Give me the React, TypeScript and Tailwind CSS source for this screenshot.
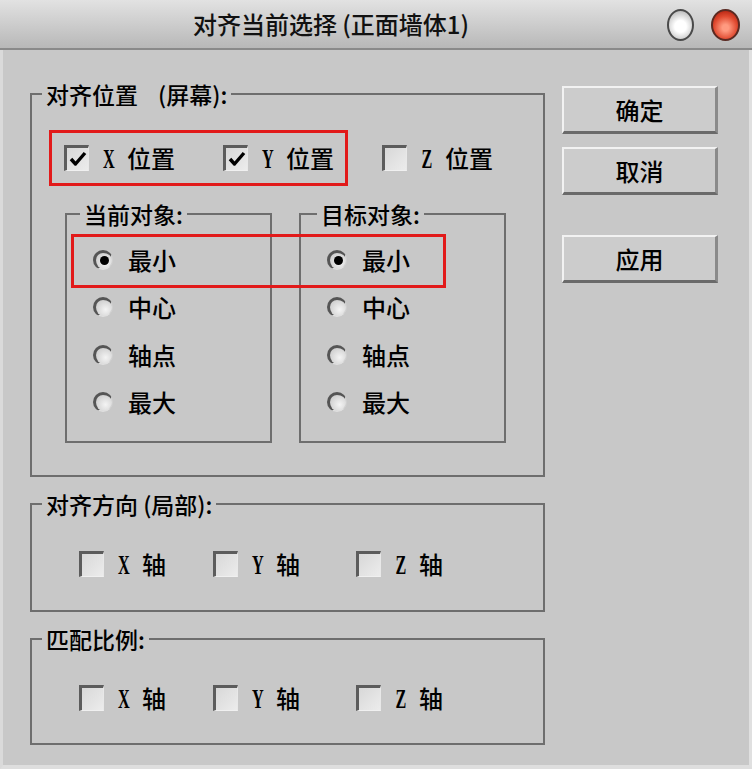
import React from "react";

const cjk = { fontFamily: '"Noto Sans CJK SC", "Noto Sans", sans-serif' };
const serif = { fontFamily: '"Liberation Serif", "DejaVu Serif", serif' };

// 3D sunken checkbox like old 3ds Max dialogs
function Check({ checked }: { checked?: boolean }) {
  return (
    <span className="relative flex h-[26px] w-[25px] shrink-0 items-center justify-center border-t-[3px] border-l-[3px] border-r border-b border-t-[#5c5c5c] border-l-[#5c5c5c] border-r-[#e8e8e8] border-b-[#f0f0f0] bg-gradient-to-br from-[#d8d8d8] to-[#ececec]">
      {checked && (
        <svg width="18" height="16" viewBox="0 0 18 16">
          <path d="M2 8 L6.5 13 L16 2" stroke="#000" strokeWidth="3.4" fill="none" strokeLinejoin="round" />
        </svg>
      )}
    </span>
  );
}

function Radio({ on }: { on?: boolean }) {
  return (
    <span className="relative flex h-[20px] w-[20px] shrink-0 items-center justify-center rounded-full border-t-[3px] border-l-[3px] border-r border-b border-t-[#555] border-l-[#555] border-r-[#d0d0d0] border-b-[#e0e0e0] bg-[radial-gradient(circle_at_60%_60%,#f4f4f4,#c4c4c4)]">
      {on && <span className="h-[9px] w-[9px] rounded-full bg-black" />}
    </span>
  );
}

function CheckItem({ letter, word, checked, w }: { letter: string; word: string; checked?: boolean; w?: string }) {
  return (
    <div className={`flex items-center ${w ?? ""}`}>
      <Check checked={checked} />
      <span className="ml-[13px] flex w-[13px] justify-center text-[27px] font-bold leading-none text-black" style={serif}>
        <span className="inline-block translate-y-[1px] scale-x-[0.6]">{letter}</span>
      </span>
      <span className="ml-[12px] text-[24px] font-medium leading-none text-black" style={cjk}>
        {word}
      </span>
    </div>
  );
}

function RadioList({ selected }: { selected: number }) {
  const items = ["最小", "中心", "轴点", "最大"];
  return (
    <div className="flex flex-col pt-[8px] pl-[26px]">
      {items.map((t, i) => (
        <div key={t} className="flex h-[47.5px] items-center">
          <Radio on={i === selected} />
          <span className="ml-[15px] text-[24px] font-medium leading-none text-black" style={cjk}>
            {t}
          </span>
        </div>
      ))}
    </div>
  );
}

const legendCls = "px-[4px] text-[23px] font-medium leading-[28px] text-black";

export default function App() {
  return (
    <div className="flex h-[769px] w-[752px] flex-col overflow-hidden bg-[#c8c8c8]" style={cjk}>
      {/* title bar */}
      <div className="relative flex h-[50px] shrink-0 items-center justify-center border-b-2 border-[#8a8a8a] bg-gradient-to-b from-[#e2e2e2] via-[#cdcdcd] to-[#b8b8b8]">
        <span className="ml-[-90px] text-[24px] font-medium text-[#111]">对齐当前选择 (正面墙体1)</span>
        <div className="absolute right-[12px] top-[9px] flex gap-[17px]">
          <span className="h-[32px] w-[27px] rounded-[50%] border-2 border-[#4a4a4a] bg-[radial-gradient(circle_at_50%_55%,#ffffff_30%,#b8b8b8_85%)]" />
          <span className="h-[32px] w-[29px] rounded-[50%] border-2 border-[#5a2a22] bg-[radial-gradient(circle_at_50%_60%,#ff9a80_15%,#e04a30_55%,#a81808_95%)]" />
        </div>
      </div>

      {/* body */}
      <div className="flex flex-1 border-l-[3px] border-r-[3px] border-b-[4px] border-l-[#dadada] border-r-[#e0e0e0] border-b-[#dedede]">
        {/* left column */}
        <div className="ml-[27px] flex w-[515px] flex-col">
          {/* group 1 */}
          <fieldset className="mt-[30px] h-[397px] border-2 border-[#6e6e6e] p-0">
            <legend className={`ml-[10px] ${legendCls}`}>
              对齐位置<span className="ml-[20px]">(屏幕):</span>
            </legend>
            <div className="mt-[22px] flex items-center">
              <div className="ml-[17px] flex h-[56px] w-[299px] items-center border-[3px] border-[#e21a1a] pl-[12px]">
                <CheckItem letter="X" word="位置" checked w="w-[159px]" />
                <CheckItem letter="Y" word="位置" checked />
              </div>
              <div className="ml-[34px]">
                <CheckItem letter="Z" word="位置" />
              </div>
            </div>

            <div className="relative ml-[33px] mt-[14px] flex gap-[27px]">
              <fieldset className="h-[243px] w-[207px] border-2 border-[#6e6e6e] p-0">
                <legend className={`ml-[13px] ${legendCls}`}>当前对象:</legend>
                <RadioList selected={0} />
              </fieldset>
              <fieldset className="h-[243px] w-[207px] border-2 border-[#6e6e6e] p-0">
                <legend className={`ml-[16px] ${legendCls}`}>目标对象:</legend>
                <RadioList selected={0} />
              </fieldset>
              {/* highlight over both "最小" rows */}
              <div className="absolute left-[6px] top-[34px] h-[54px] w-[375px] border-[3px] border-[#e21a1a]" />
            </div>
          </fieldset>

          {/* group 2 */}
          <fieldset className="mt-[13px] h-[122px] border-2 border-[#6e6e6e] p-0">
            <legend className={`ml-[10px] ${legendCls}`}>对齐方向 (局部):</legend>
            <div className="mt-[31px] flex h-[30px] items-center pl-[47px]">
              <CheckItem letter="X" word="轴" w="w-[134px]" />
              <CheckItem letter="Y" word="轴" w="w-[143px]" />
              <CheckItem letter="Z" word="轴" />
            </div>
          </fieldset>

          {/* group 3 */}
          <fieldset className="mt-[13px] h-[120px] border-2 border-[#6e6e6e] p-0">
            <legend className={`ml-[10px] ${legendCls}`}>匹配比例:</legend>
            <div className="mt-[30px] flex h-[30px] items-center pl-[47px]">
              <CheckItem letter="X" word="轴" w="w-[134px]" />
              <CheckItem letter="Y" word="轴" w="w-[143px]" />
              <CheckItem letter="Z" word="轴" />
            </div>
          </fieldset>
        </div>

        {/* right column: buttons */}
        <div className="ml-[17px] flex w-[156px] flex-col pt-[36px]">
          {["确定", "取消"].map((t, i) => (
            <button
              key={t}
              className={`flex h-[48px] items-center justify-center border-t-2 border-l-2 border-b-[3px] border-r-[3px] border-t-[#f2f2f2] border-l-[#f2f2f2] border-b-[#6a6a6a] border-r-[#8a8a8a] bg-[#cccccc] text-[24px] font-medium text-black ${i === 1 ? "mt-[13px]" : ""}`}
            >
              {t}
            </button>
          ))}
          <button className="mt-[40px] flex h-[48px] items-center justify-center border-t-2 border-l-2 border-b-[3px] border-r-[3px] border-t-[#f2f2f2] border-l-[#f2f2f2] border-b-[#6a6a6a] border-r-[#8a8a8a] bg-[#cccccc] text-[24px] font-medium text-black">
            应用
          </button>
        </div>
      </div>
    </div>
  );
}
